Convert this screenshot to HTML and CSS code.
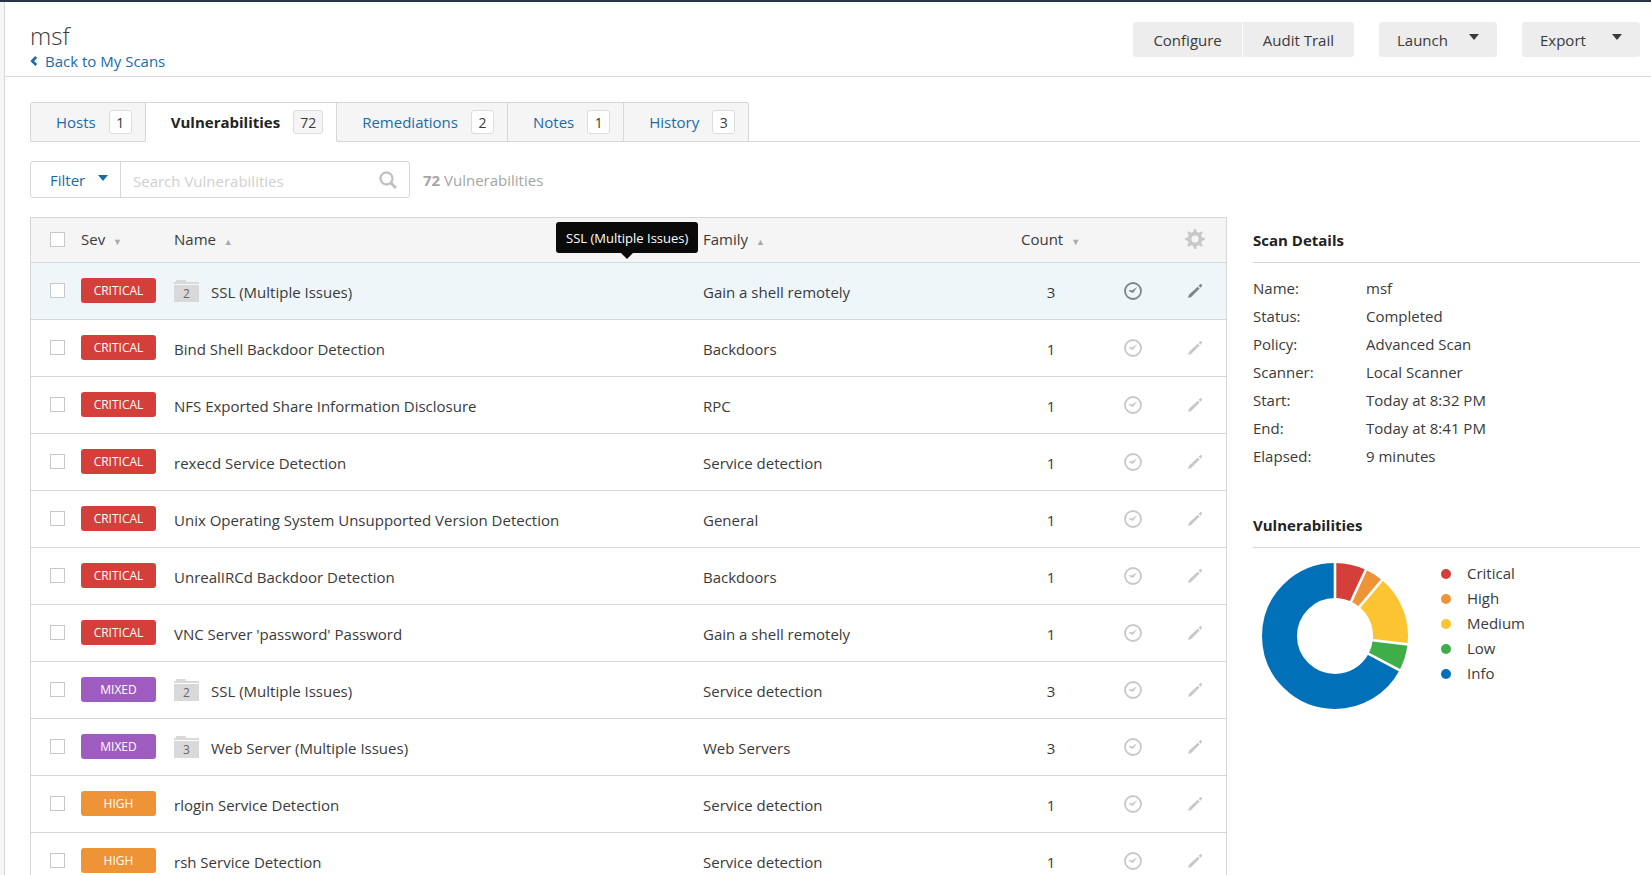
FILE: index.html
```html
<!DOCTYPE html>
<html lang="en">
<head>
  <meta charset="utf-8">
  <title>msf - Vulnerabilities</title>
  <link rel="stylesheet" href="styles.css">
</head>
<body>
  <!-- icons used in the table -->
  <svg class="sprite" width="0" height="0" aria-hidden="true">
    <symbol id="icon-check" viewBox="0 0 18 18">
      <circle cx="9" cy="9" r="8" fill="none" stroke="currentColor" stroke-width="1.8"/>
      <path d="M4.5 8.8 L6 8 L8 8.6 L13.2 5 L9.4 10.6 L8 10.8 Z" fill="currentColor"/>
    </symbol>
    <symbol id="icon-pencil" viewBox="0 0 16 16">
      <path d="M1 15 L2 11.8 L10.7 3.7 L12.6 5.6 L4.2 14 Z" fill="currentColor"/>
      <path d="M11.6 2.8 L13.2 1.2 Q14 0.8 14.7 1.4 Q15.3 2.2 14.9 3 L13.5 4.7 Z" fill="currentColor"/>
    </symbol>
    <symbol id="icon-gear" viewBox="0 0 20 20">
      <g fill="currentColor">
        <path id="tooth" d="M7.8 4 L9.2 0 H10.8 L12.2 4 Z"/>
        <use href="#tooth" transform="rotate(45 10 10)"/>
        <use href="#tooth" transform="rotate(90 10 10)"/>
        <use href="#tooth" transform="rotate(135 10 10)"/>
        <use href="#tooth" transform="rotate(180 10 10)"/>
        <use href="#tooth" transform="rotate(225 10 10)"/>
        <use href="#tooth" transform="rotate(270 10 10)"/>
        <use href="#tooth" transform="rotate(315 10 10)"/>
      </g>
      <circle cx="10" cy="10" r="5.4" fill="none" stroke="currentColor" stroke-width="3.6"/>
    </symbol>
  </svg>

  <div class="app">
    <header class="page-header">
      <div>
        <h1>msf</h1>
        <a class="back" href="#"><svg width="8" height="11" viewBox="0 0 8 11"><path d="M6.2 1 L2.2 5 L6.2 9" fill="none" stroke="currentColor" stroke-width="2.6"/></svg>Back to My Scans</a>
      </div>
      <div class="actions">
        <div class="btn-group">
          <button class="btn">Configure</button>
          <button class="btn">Audit Trail</button>
        </div>
        <button class="btn btn-drop">Launch <span class="caret"></span></button>
        <button class="btn btn-drop">Export <span class="caret"></span></button>
      </div>
    </header>

    <main>
      <nav class="tabs">
        <a class="tab" href="#">Hosts <span class="num">1</span></a>
        <a class="tab active" href="#">Vulnerabilities <span class="num">72</span></a>
        <a class="tab" href="#">Remediations <span class="num">2</span></a>
        <a class="tab" href="#">Notes <span class="num">1</span></a>
        <a class="tab" href="#">History <span class="num">3</span></a>
      </nav>

      <div class="toolbar">
        <div class="search-box">
          <button class="filter">Filter <span class="caret"></span></button>
          <input type="text" placeholder="Search Vulnerabilities" aria-label="Search Vulnerabilities">
          <svg class="search-icon" width="18" height="18" viewBox="0 0 18 18"><circle cx="7.5" cy="7.5" r="6" fill="none" stroke="currentColor" stroke-width="2.4"/><path d="M12 12 L17 17" stroke="currentColor" stroke-width="3"/></svg>
        </div>
        <p class="total"><b>72</b> Vulnerabilities</p>
      </div>

      <div class="content">
        <div class="table-wrap">
          <table>
            <thead>
              <tr>
                <th class="col-check"><input type="checkbox" aria-label="Select all"></th>
                <th class="col-sev">Sev <span class="sort">▼</span></th>
                <th class="col-name">Name <span class="sort">▲</span></th>
                <th class="col-family">Family <span class="sort">▲</span></th>
                <th class="col-count">Count <span class="sort">▼</span></th>
                <th class="col-icon"></th>
                <th class="col-icon"><svg class="gear" width="20" height="20"><use href="#icon-gear"/></svg></th>
              </tr>
            </thead>
            <tbody id="rows"></tbody>
          </table>
          <div class="tooltip" role="tooltip">SSL (Multiple Issues)</div>
        </div>

        <aside>
          <section class="details">
            <h2>Scan Details</h2>
            <dl>
              <dt>Name:</dt><dd>msf</dd>
              <dt>Status:</dt><dd>Completed</dd>
              <dt>Policy:</dt><dd>Advanced Scan</dd>
              <dt>Scanner:</dt><dd>Local Scanner</dd>
              <dt>Start:</dt><dd>Today at 8:32 PM</dd>
              <dt>End:</dt><dd>Today at 8:41 PM</dd>
              <dt>Elapsed:</dt><dd>9 minutes</dd>
            </dl>
          </section>

          <section>
            <h2>Vulnerabilities</h2>
            <div class="chart">
              <svg width="146" height="146" viewBox="-73 -73 146 146">
                <g transform="rotate(-90)" fill="none" stroke-width="35">
                  <circle class="critical" r="55.5" pathLength="360" stroke-dasharray="25 335"/>
                  <circle class="high" r="55.5" pathLength="360" stroke-dasharray="15 345" stroke-dashoffset="-25"/>
                  <circle class="medium" r="55.5" pathLength="360" stroke-dasharray="56.5 303.5" stroke-dashoffset="-40"/>
                  <circle class="low" r="55.5" pathLength="360" stroke-dasharray="21.5 338.5" stroke-dashoffset="-96.5"/>
                  <circle class="info" r="55.5" pathLength="360" stroke-dasharray="242 118" stroke-dashoffset="-118"/>
                </g>
                <g stroke="#fff" stroke-width="2.6">
                  <path d="M0 -36 V-75"/>
                  <path d="M0 -36 V-75" transform="rotate(25)"/>
                  <path d="M0 -36 V-75" transform="rotate(40)"/>
                  <path d="M0 -36 V-75" transform="rotate(96.5)"/>
                  <path d="M0 -36 V-75" transform="rotate(118)"/>
                </g>
              </svg>
              <ul class="legend">
                <li><span class="dot critical"></span>Critical</li>
                <li><span class="dot high"></span>High</li>
                <li><span class="dot medium"></span>Medium</li>
                <li><span class="dot low"></span>Low</li>
                <li><span class="dot info"></span>Info</li>
              </ul>
            </div>
          </section>
        </aside>
      </div>
    </main>
  </div>

  <script src="script.js"></script>
</body>
</html>
```
FILE: styles.css
```css
* {
  box-sizing: border-box;
}

body {
  margin: 0;
  height: 100vh;
  overflow: hidden;
  font-family: "Open Sans", "Segoe UI", sans-serif;
  font-size: 15px;
  line-height: 20px;
  color: #3a3a3a;
  background: #f5f5f5;
  border-top: 2px solid #263645;
  padding-left: 4px;
}

a {
  color: #1a6bab;
  text-decoration: none;
}

button,
input {
  font: inherit;
  color: inherit;
}

.sprite {
  position: absolute;
}

.app {
  min-height: 100%;
  background: #fff;
  border-left: 1px solid #d5d8d8;
}

/* Header */
.page-header {
  display: flex;
  justify-content: space-between;
  align-items: flex-start;
  height: 75px;
  padding: 18px 11px 0 25px;
  border-bottom: 1px solid #d5d8d8;
}

h1 {
  margin: 0;
  font-size: 24px;
  line-height: 31px;
  font-weight: 300;
}

.back {
  display: block;
}

.back svg {
  margin-right: 7px;
}

.actions {
  display: flex;
  gap: 25px;
  padding-top: 2px;
}

.btn-group {
  display: flex;
  gap: 1px;
}

.btn {
  height: 35px;
  padding: 0 20px;
  border: 0;
  border-radius: 3px;
  background: #ededed;
  white-space: nowrap;
  cursor: pointer;
}

.btn-group .btn:first-child {
  border-radius: 3px 0 0 3px;
}

.btn-group .btn:last-child {
  border-radius: 0 3px 3px 0;
}

.btn-drop {
  display: flex;
  justify-content: space-between;
  align-items: center;
  width: 118px;
  padding: 0 18px;
}

.caret {
  display: inline-block;
  border: 5px solid transparent;
  border-top: 6px solid currentColor;
  border-bottom: 0;
}

.btn .caret {
  margin-bottom: 5px;
}

/* Tabs */
main {
  padding: 25px 11px 0 25px;
}

.tabs {
  display: flex;
  border-bottom: 1px solid #d5d8d8;
}

.tab {
  display: flex;
  align-items: center;
  gap: 13px;
  height: 40px;
  margin-bottom: -1px;
  padding: 0 13px 0 25px;
  border: 1px solid #d5d8d8;
  border-left-width: 0;
  background: #f5f5f5;
}

.tab:first-child {
  border-left-width: 1px;
  border-radius: 3px 0 0 0;
}

.tab:last-child {
  border-radius: 0 3px 0 0;
}

.tab.active {
  background: #fff;
  border-bottom-color: #fff;
  color: #222;
  font-weight: 700;
}

.num {
  min-width: 23px;
  height: 24px;
  padding: 0 6px;
  border: 1px solid #ddd;
  border-radius: 3px;
  background: #fff;
  color: #3a3a3a;
  font-size: 14px;
  line-height: 23px;
  font-weight: 400;
  text-align: center;
}

.active .num {
  background: #f5f5f5;
}

/* Filter and search */
.toolbar {
  display: flex;
  align-items: center;
  gap: 13px;
  margin: 19px 0;
}

.search-box {
  display: flex;
  align-items: center;
  width: 380px;
  height: 37px;
  padding-right: 12px;
  border: 1px solid #d5d8d8;
  border-radius: 3px;
}

.filter {
  display: flex;
  align-items: center;
  justify-content: space-between;
  width: 90px;
  height: 100%;
  padding: 0 12px 0 19px;
  border: 0;
  border-right: 1px solid #d5d8d8;
  background: none;
  color: #1a6bab;
}

.filter .caret {
  margin-bottom: 3px;
}

.search-box input {
  flex: 1;
  min-width: 0;
  height: 100%;
  padding: 2px 12px 0;
  border: 0;
  background: none;
}

.search-box input::placeholder {
  color: #d0d0d0;
}

.search-icon {
  color: #c2c2c2;
}

.total {
  margin: 0;
  color: #a5a5a5;
}

/* Table */
.content {
  display: flex;
  align-items: flex-start;
  gap: 26px;
}

.table-wrap {
  position: relative;
  flex: 1;
}

table {
  width: 100%;
  table-layout: fixed;
  border-collapse: separate;
  border-spacing: 0;
  border: 1px solid #d5d8d8;
}

th,
td {
  padding: 0;
  border-bottom: 1px solid #d5d8d8;
  font-weight: 400;
  text-align: left;
  white-space: nowrap;
}

th {
  height: 45px;
  background: #f5f5f5;
}

td {
  height: 57px;
  padding-top: 2px;
}

.col-check {
  width: 50px;
}

.col-sev {
  width: 93px;
}

.col-family {
  width: 318px;
}

.col-count {
  width: 81px;
}

.col-icon {
  width: 62px;
}

td.col-count {
  padding-right: 21px;
  text-align: center;
}

input[type="checkbox"] {
  display: block;
  appearance: none;
  width: 15px;
  height: 15px;
  margin: 0 0 2px 19px;
  border: 1px solid #c8c8c8;
  background: #fff;
}

td input[type="checkbox"],
.sev {
  margin-bottom: 4px;
}

.sort {
  margin-left: 4px;
  color: #aaa;
  font-size: 9px;
}

td svg,
th svg {
  display: block;
  margin: 0 auto 2px;
  color: #c8c8c8;
}

tr.hover td {
  background: #eef6fa;
}

tr.hover svg {
  color: #7d8488;
}

.sev {
  display: block;
  width: 75px;
  height: 25px;
  border-radius: 3px;
  color: #fff;
  font-size: 12px;
  line-height: 25px;
  text-align: center;
}

.name {
  display: flex;
  align-items: center;
  gap: 12px;
}

.folder {
  width: 25px;
  height: 22px;
  margin-bottom: 2px;
  padding-top: 5px;
  background:
    linear-gradient(#d9d9d9, #d9d9d9) 2px 0 / 10px 2px no-repeat,
    linear-gradient(#d9d9d9, #d9d9d9) 0 2px / 25px 2px no-repeat,
    linear-gradient(#d9d9d9, #d9d9d9) 0 5px / 25px 17px no-repeat;
  color: #666;
  font-size: 12px;
  line-height: 18px;
  text-align: center;
}

/* Sits above the hovered row */
.tooltip {
  position: absolute;
  top: 5px;
  left: 526px;
  padding: 6px 10px 5px;
  border-radius: 3px;
  background: #0a0a0a;
  color: #fff;
  font-size: 13px;
}

.tooltip::after {
  content: "";
  position: absolute;
  top: 100%;
  left: 50%;
  margin-left: -6px;
  border: 6px solid transparent;
  border-top-color: #0a0a0a;
  border-bottom: 0;
}

/* Side panel */
aside {
  width: 387px;
}

h2 {
  margin: 0;
  padding: 13px 0 12px;
  border-bottom: 1px solid #d5d8d8;
  color: #222;
  font-size: 15px;
  line-height: 20px;
}

dl {
  display: grid;
  grid-template-columns: 113px 1fr;
  margin: 11px 0 32px;
  line-height: 28px;
}

dd {
  margin: 0;
}

.chart {
  display: flex;
  align-items: flex-start;
  gap: 33px;
  padding: 13px 0 0 9px;
}

.chart svg {
  margin-top: 2px;
}

.legend {
  margin: 0;
  padding: 0;
  list-style: none;
  line-height: 25px;
}

.legend li {
  display: flex;
  align-items: center;
  gap: 16px;
}

.dot {
  width: 10px;
  height: 10px;
  border-radius: 50%;
}

/* Severity colours */
.critical {
  background: #d43f3a;
  stroke: #d43f3a;
}

.high {
  background: #ee9336;
  stroke: #ee9336;
}

.medium {
  background: #fdc431;
  stroke: #fdc431;
}

.low {
  background: #3fae49;
  stroke: #3fae49;
}

.info {
  background: #0071b9;
  stroke: #0071b9;
}

.mixed {
  background: #9f5cc0;
}
```
FILE: script.js
```js
var vulns = [
  { sev: "critical", name: "SSL (Multiple Issues)", group: 2, family: "Gain a shell remotely", count: 3, hover: true },
  { sev: "critical", name: "Bind Shell Backdoor Detection", family: "Backdoors", count: 1 },
  { sev: "critical", name: "NFS Exported Share Information Disclosure", family: "RPC", count: 1 },
  { sev: "critical", name: "rexecd Service Detection", family: "Service detection", count: 1 },
  { sev: "critical", name: "Unix Operating System Unsupported Version Detection", family: "General", count: 1 },
  { sev: "critical", name: "UnrealIRCd Backdoor Detection", family: "Backdoors", count: 1 },
  { sev: "critical", name: "VNC Server 'password' Password", family: "Gain a shell remotely", count: 1 },
  { sev: "mixed", name: "SSL (Multiple Issues)", group: 2, family: "Service detection", count: 3 },
  { sev: "mixed", name: "Web Server (Multiple Issues)", group: 3, family: "Web Servers", count: 3 },
  { sev: "high", name: "rlogin Service Detection", family: "Service detection", count: 1 },
  { sev: "high", name: "rsh Service Detection", family: "Service detection", count: 1 }
];

var html = "";
vulns.forEach(function (v) {
  var folder = v.group ? '<span class="folder">' + v.group + "</span>" : "";
  html += "<tr" + (v.hover ? ' class="hover"' : "") + ">" +
    '<td><input type="checkbox" aria-label="Select ' + v.name + '"></td>' +
    '<td><span class="sev ' + v.sev + '">' + v.sev.toUpperCase() + "</span></td>" +
    '<td><div class="name">' + folder + "<span>" + v.name + "</span></div></td>" +
    "<td>" + v.family + "</td>" +
    '<td class="col-count">' + v.count + "</td>" +
    '<td><svg width="18" height="18"><use href="#icon-check"/></svg></td>' +
    '<td><svg width="16" height="16"><use href="#icon-pencil"/></svg></td>' +
    "</tr>";
});
document.getElementById("rows").innerHTML = html;
```
